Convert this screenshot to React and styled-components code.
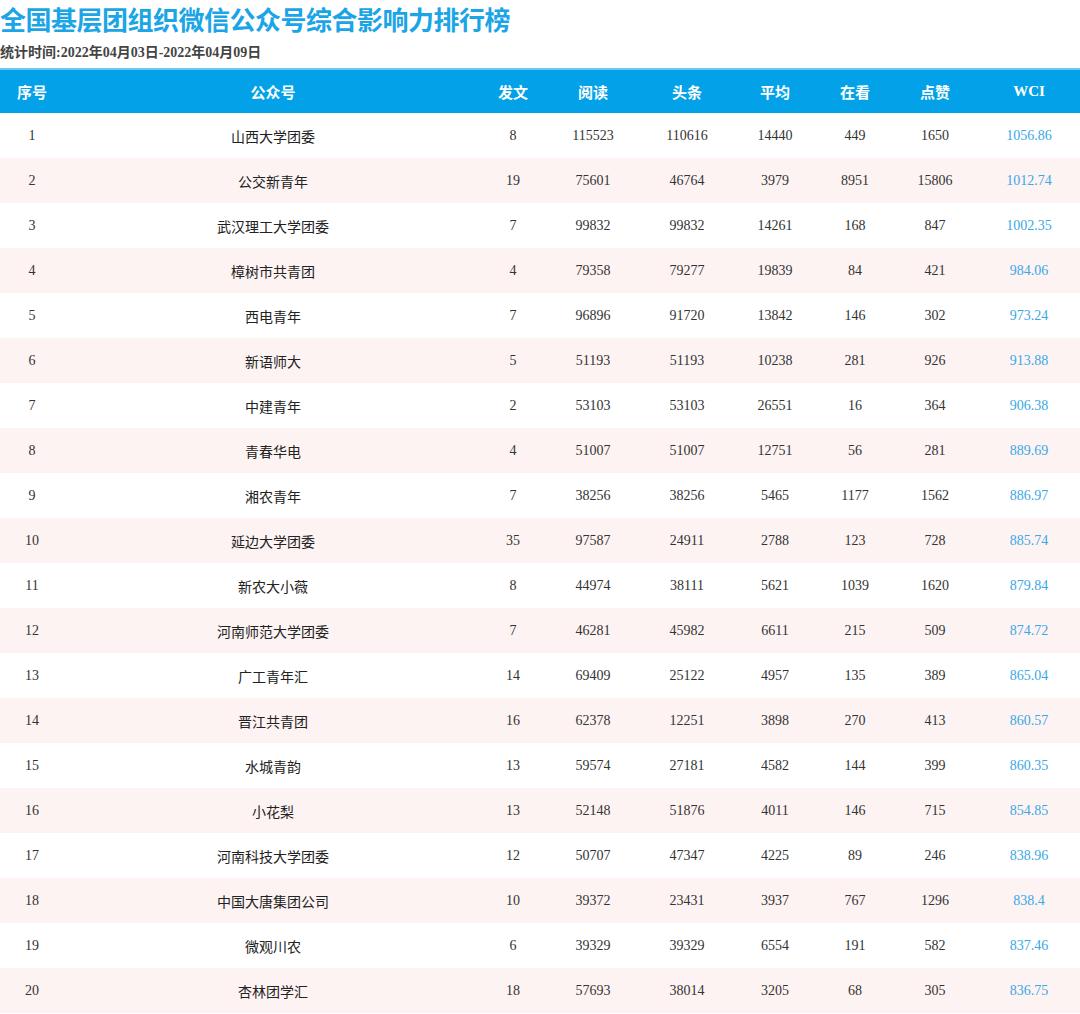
import React from "react";
import styled, { createGlobalStyle } from "styled-components";

const G = createGlobalStyle`
  body { margin: 0; background: #fff; font-family: "Liberation Serif", "Noto Sans CJK SC", serif; }
`;
const cols = "64px 418px 62px 98px 90px 86px 74px 86px 1fr";
const Title = styled.h1`
  margin: 0; padding-top: 2px; height: 36px; font-size: 26px; font-weight: bold; color: #1ba5e6;
  font-family: "Noto Sans CJK SC", sans-serif; line-height: 34px; letter-spacing: -0.5px;
`;
const Sub = styled.div`
  height: 30px; line-height: 30px; font-size: 14px; font-weight: bold; color: #444;
  font-family: "Liberation Serif", "Noto Sans CJK SC", serif;
`;
const Head = styled.div`
  display: grid; grid-template-columns: ${cols}; height: 43px; background: #03a2e8;
  border-top: 2px solid #6cc8f2;
  color: #fff; font-weight: bold; font-size: 15px; align-items: center; text-align: center;
  font-family: "Noto Sans CJK SC", sans-serif;
`;
const HeadLatin = styled.span`font-family: "Liberation Serif", serif; font-size: 15px;`;
const Row = styled.div`
  display: grid; grid-template-columns: ${cols}; height: 45px; align-items: center; text-align: center;
  background: ${p => (p.$alt ? "#fdf3f3" : "#fff")}; color: #333; font-size: 14px;
`;
const Name = styled.span`font-family: "Noto Sans CJK SC", sans-serif; font-size: 14px; color: #222;`;
const Wci = styled.span`color: #3aa8e6;`;

const data = [
["山西大学团委",8,115523,110616,14440,449,1650,"1056.86"],
["公交新青年",19,75601,46764,3979,8951,15806,"1012.74"],
["武汉理工大学团委",7,99832,99832,14261,168,847,"1002.35"],
["樟树市共青团",4,79358,79277,19839,84,421,"984.06"],
["西电青年",7,96896,91720,13842,146,302,"973.24"],
["新语师大",5,51193,51193,10238,281,926,"913.88"],
["中建青年",2,53103,53103,26551,16,364,"906.38"],
["青春华电",4,51007,51007,12751,56,281,"889.69"],
["湘农青年",7,38256,38256,5465,1177,1562,"886.97"],
["延边大学团委",35,97587,24911,2788,123,728,"885.74"],
["新农大小薇",8,44974,38111,5621,1039,1620,"879.84"],
["河南师范大学团委",7,46281,45982,6611,215,509,"874.72"],
["广工青年汇",14,69409,25122,4957,135,389,"865.04"],
["晋江共青团",16,62378,12251,3898,270,413,"860.57"],
["水城青韵",13,59574,27181,4582,144,399,"860.35"],
["小花梨",13,52148,51876,4011,146,715,"854.85"],
["河南科技大学团委",12,50707,47347,4225,89,246,"838.96"],
["中国大唐集团公司",10,39372,23431,3937,767,1296,"838.4"],
["微观川农",6,39329,39329,6554,191,582,"837.46"],
["杏林团学汇",18,57693,38014,3205,68,305,"836.75"],
];

export default function App() {
  return (
    <>
      <G />
      <Title>全国基层团组织微信公众号综合影响力排行榜</Title>
      <Sub>统计时间:2022年04月03日-2022年04月09日</Sub>
      <Head>
        <span>序号</span><span>公众号</span><span>发文</span><span>阅读</span><span>头条</span>
        <span>平均</span><span>在看</span><span>点赞</span><HeadLatin>WCI</HeadLatin>
      </Head>
      {data.map((r, i) => (
        <Row key={i} $alt={i % 2 === 1}>
          <span>{i + 1}</span><Name>{r[0]}</Name>
          {r.slice(1, 7).map((v, j) => <span key={j}>{v}</span>)}
          <Wci>{r[7]}</Wci>
        </Row>
      ))}
    </>
  );
}
